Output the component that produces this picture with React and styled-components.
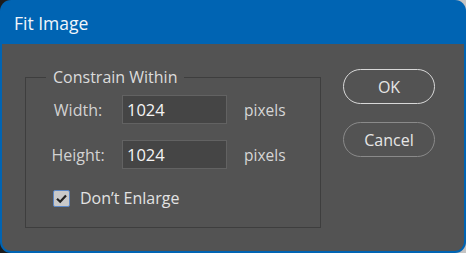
import React from 'react'
import styled, { createGlobalStyle } from 'styled-components'

const GlobalStyle = createGlobalStyle`
    html, body {
        margin: 0;
        padding: 0;
        width: 466px;
        height: 253px;
        overflow: hidden;
        background: linear-gradient(to right, #1c1c1c, #c4c4c4);
        font-family: "Open Sans", "Noto Sans", sans-serif;
    }
`;

const App = () => {
  return (
    <>
      <GlobalStyle />
      <Dialog>
        <TitleBar>Fit Image</TitleBar>
        <Body>
          <Group>
            <Legend>Constrain Within</Legend>
            <Fields>
              <Label>Width:</Label>
              <Input defaultValue="1024" />
              <Unit>pixels</Unit>
              <Label>Height:</Label>
              <Input defaultValue="1024" />
              <Unit>pixels</Unit>
            </Fields>
            <CheckRow>
              <Box>
                <svg width="13" height="13" viewBox="0 0 13 13">
                  <path d="M2 6.8 L5.2 9.8 L11 3.4" fill="none" stroke="#222" strokeWidth="2.2" />
                </svg>
              </Box>
              <CheckLabel>Don’t Enlarge</CheckLabel>
            </CheckRow>
          </Group>
          <Buttons>
            <Button $primary>OK</Button>
            <Button>Cancel</Button>
          </Buttons>
        </Body>
      </Dialog>
    </>
  )
}

export default App

const Dialog = styled.div`
    width: 466px;
    height: 253px;
    box-sizing: border-box;
    background: #0064b3;
    border-radius: 11px;
    padding: 0 2px 2px 2px;
    display: flex;
    flex-direction: column;
    overflow: hidden;
`;

const TitleBar = styled.div`
    height: 44px;
    flex: none;
    display: flex;
    align-items: center;
    padding-left: 12px;
    padding-top: 2px;
    box-sizing: border-box;
    color: #f2f6fb;
    font-size: 17.5px;
`;

const Body = styled.div`
    flex: 1;
    background: #535353;
    border-radius: 0 0 9px 9px;
    display: flex;
    align-items: flex-start;
    padding: 23px 0 0 23px;
    gap: 22px;
`;

const Group = styled.fieldset`
    margin: 0;
    width: 296px;
    height: 161px;
    box-sizing: border-box;
    border: 1px solid #3e3e3e;
    padding: 0;
`;

const Legend = styled.legend`
    margin-left: 20px;
    padding: 0 7px;
    color: #dcdcdc;
    font-size: 16px;
    line-height: 20px;
`;

const Fields = styled.div`
    display: grid;
    grid-template-columns: 72px 105px auto;
    column-gap: 8px;
    row-gap: 16px;
    align-items: center;
    padding: 8px 0 0 16px;
`;

const Label = styled.div`
    text-align: center;
    color: #d2d2d2;
    font-size: 16px;
`;

const Input = styled.input`
    width: 105px;
    height: 29px;
    box-sizing: border-box;
    background: #454545;
    border: 1px solid #626262;
    color: #f4f4f4;
    font-family: inherit;
    font-size: 16.5px;
    padding: 0 4px;
    outline: none;
`;

const Unit = styled.div`
    margin-left: 9px;
    color: #d6d6d6;
    font-size: 15.5px;
`;

const CheckRow = styled.div`
    display: flex;
    align-items: center;
    gap: 10px;
    margin: 18px 0 0 27px;
`;

const Box = styled.div`
    width: 17px;
    height: 17px;
    box-sizing: border-box;
    border: 1px solid #5b87c6;
    border-radius: 2px;
    background: #c9c9c9;
    display: flex;
    align-items: center;
    justify-content: center;
`;

const CheckLabel = styled.div`
    color: #e2e2e2;
    font-size: 16px;
`;

const Buttons = styled.div`
    display: flex;
    flex-direction: column;
    gap: 18px;
    margin-top: 2px;
`;

const Button = styled.button`
    width: 92px;
    height: 35px;
    border-radius: 18px;
    background: transparent;
    border: 1.5px solid ${p => (p.$primary ? '#d8d8d8' : '#8a8a8a')};
    color: #e6e6e6;
    font-family: inherit;
    font-size: 16px;
    padding: 0;
`;
